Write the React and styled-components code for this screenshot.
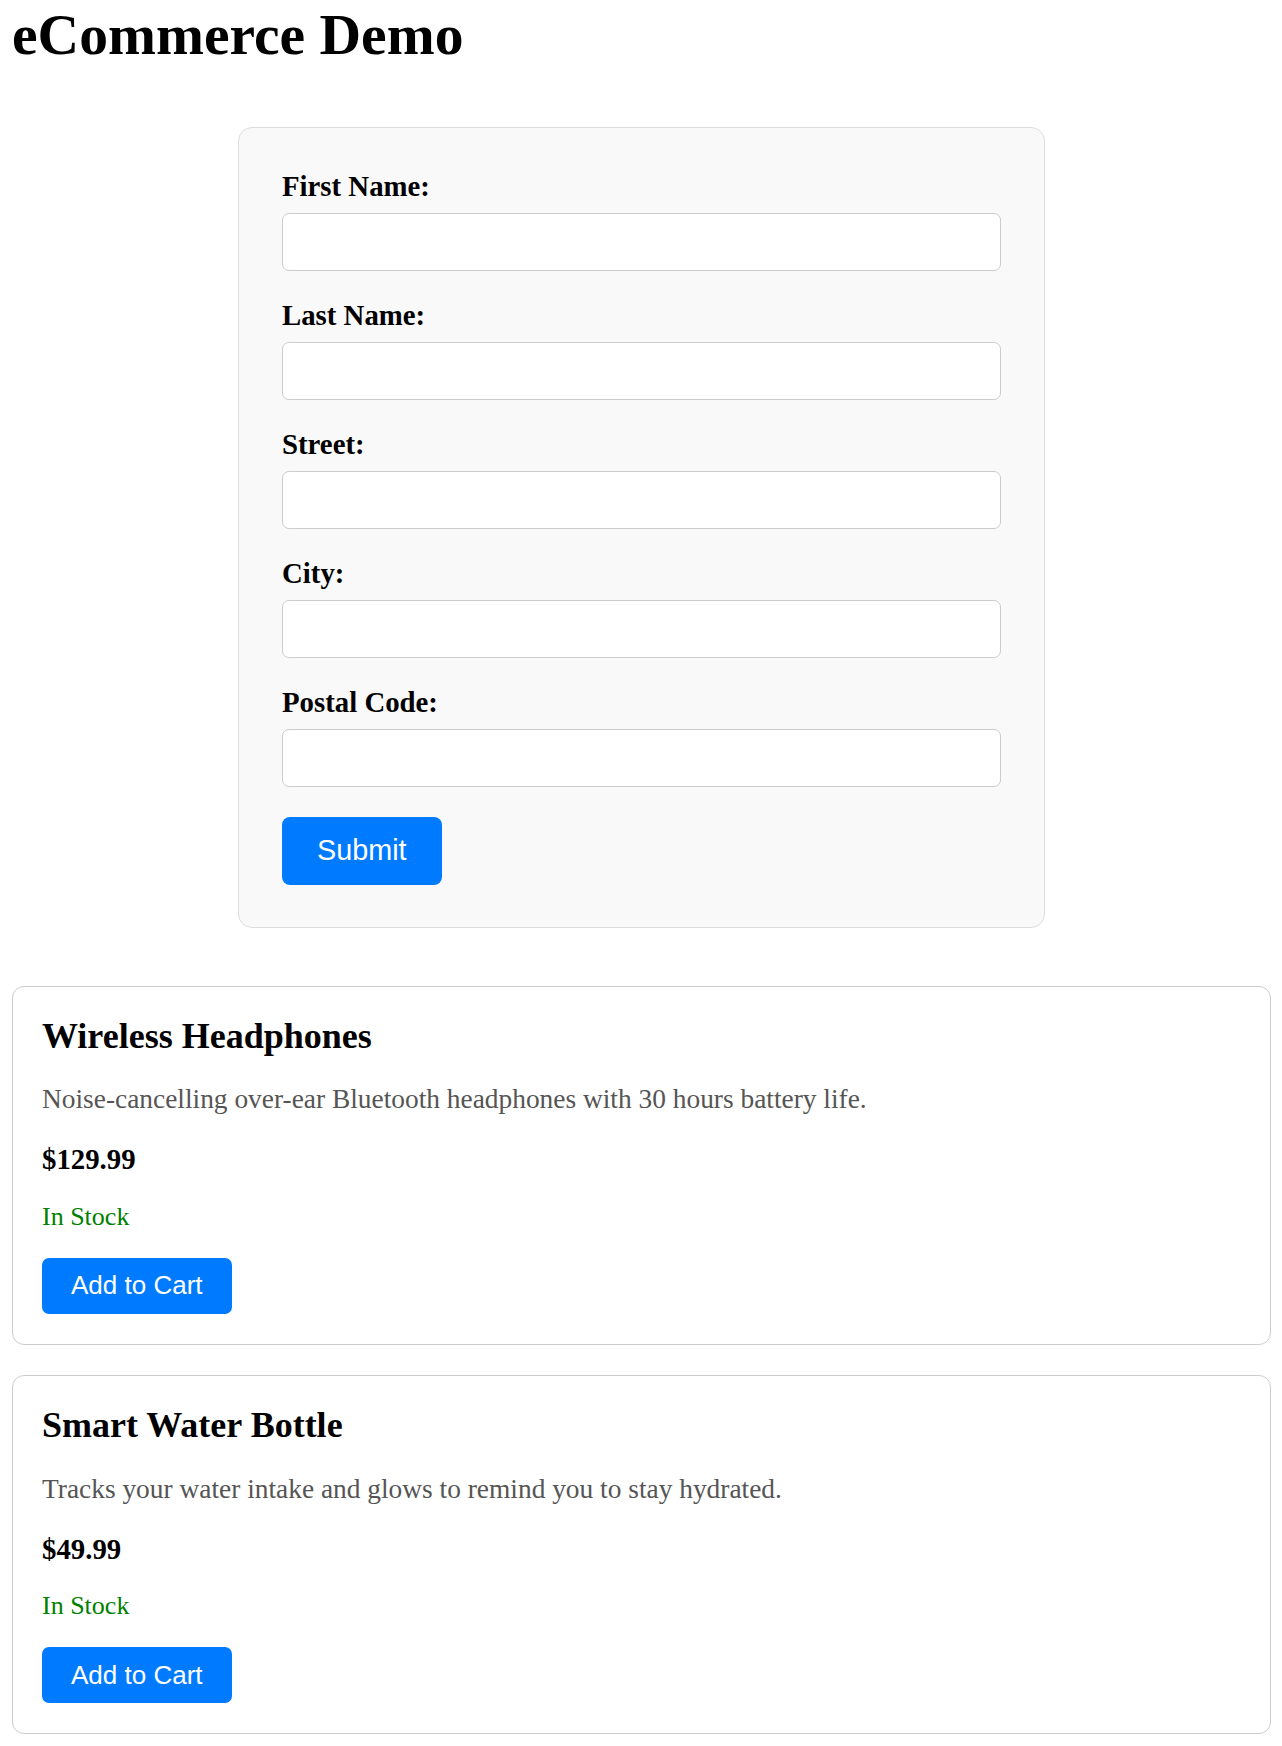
import styled, { createGlobalStyle } from "styled-components";

const GlobalStyle = createGlobalStyle`
  body {
    margin: 0;
    background: #fff;
    font-family: "Liberation Serif", "Times New Roman", serif;
    line-height: 1.107;
    color: #000;
  }
`;

const fields = [
  { id: "firstName", label: "First Name:" },
  { id: "lastName", label: "Last Name:" },
  { id: "street", label: "Street:" },
  { id: "city", label: "City:" },
  { id: "postalCode", label: "Postal Code:" },
];

const products = [
  {
    id: 1,
    name: "Wireless Headphones",
    description:
      "Noise-cancelling over-ear Bluetooth headphones with 30 hours battery life.",
    price: "$129.99",
    inStock: true,
  },
  {
    id: 2,
    name: "Smart Water Bottle",
    description: "Tracks your water intake and glows to remind you to stay hydrated.",
    price: "$49.99",
    inStock: true,
  },
];

export default function App() {
  return (
    <>
      <GlobalStyle />
      <Page>
        <Heading>eCommerce Demo</Heading>
        <Form onSubmit={(e) => e.preventDefault()}>
          {fields.map((f) => (
            <Group key={f.id}>
              <Label htmlFor={f.id}>{f.label}</Label>
              <Input id={f.id} type="text" />
            </Group>
          ))}
          <SubmitButton type="submit">Submit</SubmitButton>
        </Form>
        <List>
          {products.map((p) => (
            <Card key={p.id}>
              <Title>{p.name}</Title>
              <Description>{p.description}</Description>
              <Price>{p.price}</Price>
              <Stock $inStock={p.inStock}>
                {p.inStock ? "In Stock" : "Out of Stock"}
              </Stock>
              <CartButton>Add to Cart</CartButton>
            </Card>
          ))}
        </List>
      </Page>
    </>
  );
}

const Page = styled.div`
  padding: 0 11px 14px 12px;
`;

const Heading = styled.h1`
  font-size: 57.6px;
  font-weight: bold;
  margin: 3px 0 60px;
`;

const Form = styled.form`
  box-sizing: border-box;
  width: 807px;
  margin: 0 auto;
  padding: 43px 43px 42px;
  background: #f9f9f9;
  border: 1px solid #ddd;
  border-radius: 14px;
`;

const Group = styled.div`
  margin-bottom: 29.3px;
`;

const Label = styled.label`
  display: block;
  font-size: 28.8px;
  font-weight: bold;
  margin-bottom: 10px;
`;

const Input = styled.input`
  display: block;
  box-sizing: border-box;
  width: 100%;
  height: 58px;
  padding: 0 16px;
  font-size: 26px;
  background: #fff;
  border: 1px solid #ccc;
  border-radius: 7px;
`;

const SubmitButton = styled.button`
  display: block;
  height: 68px;
  padding: 0 35px;
  font-family: "Liberation Sans", Arial, sans-serif;
  font-size: 28.8px;
  color: #fff;
  background: #007bff;
  border: none;
  border-radius: 8px;
  cursor: pointer;
`;

const List = styled.div`
  margin-top: 58px;
  display: flex;
  flex-direction: column;
  gap: 30px;
`;

const Card = styled.div`
  border: 1px solid #ccc;
  border-radius: 12px;
  padding: 30px 29px 30px;
`;

const Title = styled.h2`
  font-size: 36px;
  font-weight: bold;
  margin: 0 0 28px;
`;

const Description = styled.p`
  font-size: 27.4px;
  color: #555;
  margin: 0 0 29.5px;
`;

const Price = styled.p`
  font-size: 28.8px;
  font-weight: bold;
  margin: 0 0 27px;
`;

const Stock = styled.p`
  font-size: 26px;
  color: ${(p) => (p.$inStock ? "green" : "red")};
  margin: 0 0 26px;
`;

const CartButton = styled.button`
  display: block;
  height: 56px;
  padding: 0 29px;
  font-family: "Liberation Sans", Arial, sans-serif;
  font-size: 26px;
  color: #fff;
  background: #007bff;
  border: none;
  border-radius: 7px;
  cursor: pointer;
`;
